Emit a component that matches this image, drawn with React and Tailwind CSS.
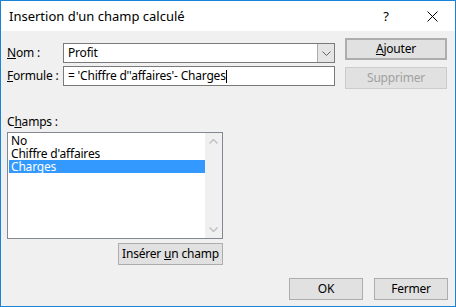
// Boîte de dialogue Excel : Insertion d'un champ calculé
export default function App() {
  const fields = ['No', "Chiffre d'affaires", 'Charges']
  const selected = 'Charges'

  const btn = 'h-[22px] border border-[#adadad] bg-[#e1e1e1] flex items-center justify-center text-[12px] text-black'

  return (
    <div
      className="w-[456px] h-[307px] border border-[#1883d7] bg-[#f0f0f0] flex flex-col text-[12px] tracking-[-0.2px] text-black overflow-hidden"
      style={{ fontFamily: '"Noto Sans", "Liberation Sans", sans-serif' }}
    >
      {/* Title bar */}
      <div className="h-[30px] bg-white flex items-center shrink-0">
        <span className="pl-[8px] flex-1 text-[13px] tracking-normal leading-none">Insertion d'un champ calculé</span>
        <span className="w-[46px] text-center text-[13px] leading-none">?</span>
        <span className="w-[46px] h-full flex items-center justify-center">
          <svg width="11" height="11" viewBox="0 0 11 11">
            <path d="M0.5 0.5 L10.5 10.5 M10.5 0.5 L0.5 10.5" stroke="#000" strokeWidth="1" fill="none" />
          </svg>
        </span>
      </div>

      <div className="flex-1 flex flex-col pl-[6px] pr-[7px]">
        {/* Nom / Formule + Ajouter / Supprimer */}
        <div className="flex items-start">
          <div className="w-[328px] pt-[12px] flex flex-col gap-[3px]">
            <div className="flex items-center">
              <label className="w-[56px] leading-none"><u>N</u>om :</label>
              <div className="w-[272px] h-[20px] bg-white border border-[#7a7a7a] flex items-stretch">
                <span className="flex-1 pl-[4px] flex items-center leading-none">Profit</span>
                <span className="w-[17px] bg-[#e5e5e5] border-l border-[#acacac] flex items-center justify-center">
                  <svg width="9" height="5" viewBox="0 0 9 5">
                    <path d="M0.5 0.5 L4.5 4.5 L8.5 0.5" stroke="#606060" strokeWidth="1" fill="none" />
                  </svg>
                </span>
              </div>
            </div>
            <div className="flex items-center">
              <label className="w-[56px] leading-none"><u>F</u>ormule :</label>
              <div className="w-[272px] h-[20px] bg-white border border-[#7a7a7a] flex items-center pl-[4px] leading-none">
                <span>= 'Chiffre d''affaires'- Charges</span>
                <span className="w-px h-[13px] bg-black" />
              </div>
            </div>
          </div>
          <div className="ml-[10px] w-[102px] pt-[7px] flex flex-col gap-[7px]">
            <button className={btn + ' border-2 border-[#0078d7]'}>
              <span><u>A</u>jouter</span>
            </button>
            <button className="h-[22px] border border-[#cccccc] bg-[#e1e1e1] flex items-center justify-center text-[12px] text-[#a0a0a0]">
              Supprimer
            </button>
          </div>
        </div>

        {/* Champs */}
        <div className="mt-[27px] leading-none">C<u>h</u>amps :</div>
        <div className="mt-[4px] w-[216px] h-[107px] bg-white border border-[#828790] flex">
          <div className="flex-1 pt-px pl-px">
            {fields.map(f => (
              <div
                key={f}
                className={`h-[13px] pl-[2px] leading-[13px] ${f === selected ? 'bg-[#3399ff] text-white' : ''}`}
              >
                {f}
              </div>
            ))}
          </div>
          <div className="w-[17px] bg-[#f0f0f0] flex flex-col justify-between items-center py-[6px]">
            <svg width="9" height="5" viewBox="0 0 9 5">
              <path d="M0.5 4.5 L4.5 0.5 L8.5 4.5" stroke="#c2c2c2" strokeWidth="1.5" fill="none" />
            </svg>
            <svg width="9" height="5" viewBox="0 0 9 5">
              <path d="M0.5 0.5 L4.5 4.5 L8.5 0.5" stroke="#c2c2c2" strokeWidth="1.5" fill="none" />
            </svg>
          </div>
        </div>
        <div className="w-[216px] flex justify-end mt-[4px]">
          <button className={btn + ' w-[105px] h-[21px]'}>
            <span>Insérer <u>u</u>n champ</span>
          </button>
        </div>

        {/* OK / Fermer */}
        <div className="flex justify-end gap-[11px] mt-[13px]">
          <button className={btn + ' w-[74px]'}>OK</button>
          <button className={btn + ' w-[74px]'}>Fermer</button>
        </div>
      </div>
    </div>
  )
}
